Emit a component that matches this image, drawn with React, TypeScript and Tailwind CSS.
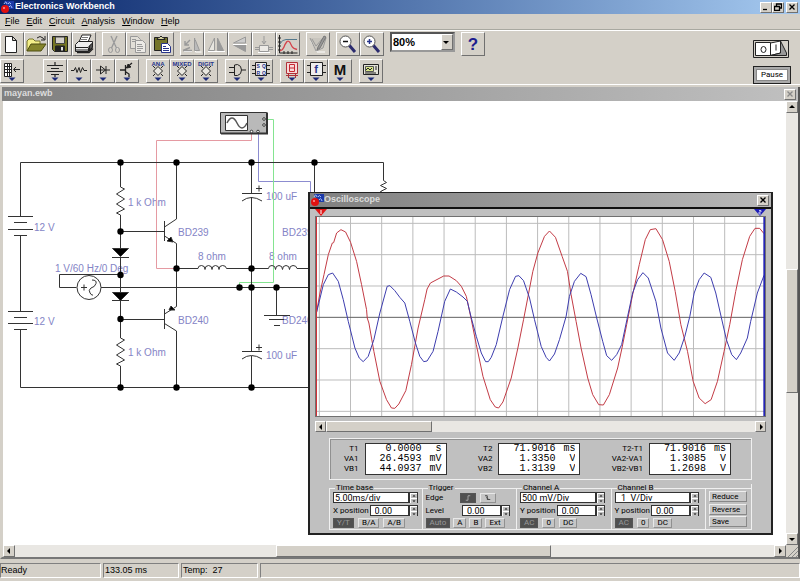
import type { ReactNode } from 'react'
import { clsx } from 'clsx'

const RAISED = 'border border-t-white border-l-white border-b-[#707070] border-r-[#707070]'
const SUNKEN = 'border border-t-[#808080] border-l-[#808080] border-b-white border-r-white'
const TRACK = 'bg-[#e9e7e3]'

/* ---------- Toolbar icons (22x22) ---------- */

function Icon({ children }: { children: ReactNode }) {
  return (
    <svg viewBox="0 0 22 22" className="block size-full" fill="none" stroke="#222" strokeWidth="1">
      {children}
    </svg>
  )
}

// Small navy arrow under every parts bin icon
function BinArrow() {
  return <path d="M7.5 17.5h7l-3.5 3.5z" fill="#1c2a78" stroke="none" />
}

const icons: Record<string, ReactNode> = {
  New: <path d="M4.5 3.5h7l4 4v12h-11zM11.5 3.5v4h4" fill="#fff" />,
  Open: (
    <>
      <path d="M2 18V8l2-2h4l2 2h5v3" fill="#f4f08a" stroke="#77752a" />
      <path d="M2 18l4-7h15l-5 7z" fill="#85852c" stroke="#4c4c10" />
      <path d="M12 5q3-3 6 0l1 1.500M20 3v4h-4" stroke="#222" />
    </>
  ),
  Save: (
    <>
      <path d="M3.500 3.500h15v15h-13l-2-2z" fill="#757522" />
      <path d="M6.500 4h9v6.500h-9z" fill="#d4d0c8" stroke="#444" />
      <path d="M6.500 13h9v5h-9z" fill="#222" />
      <path d="M12 14h2v3.500h-2z" fill="#e0e0e0" stroke="none" />
    </>
  ),
  Print: (
    <>
      <path d="M6 9l3-7h9l-3 7z" fill="#fff" />
      <path d="M9 4.500h6M8 6.500h6" stroke="#777" />
      <path d="M2.500 11.500l3-3h14v6l-4 4h-13z" fill="#eee" />
      <path d="M3 14.500h12l4-4M15.500 14.500v4M3 17h12" />
      <path d="M16.500 13l3-3v4l-3 3z" fill="#555" />
      <path d="M4 19.500h12l4-4" strokeWidth="1.500" />
    </>
  ),
  Cut: (
    <g stroke="#999">
      <path d="M9 5l5 11" stroke="#fff" />
      <path d="M8 3l5.500 12M14 3L8.500 15" strokeWidth="1.400" />
      <ellipse cx="7.500" cy="17" rx="2" ry="2.500" />
      <ellipse cx="14.500" cy="17" rx="2" ry="2.500" />
    </g>
  ),
  Copy: (
    <g stroke="#999">
      <path d="M3.500 3.500h7l3 3v9h-10z" fill="#e2dfd8" />
      <path d="M8.500 7.500h7l3 3v9h-10z" fill="#eceae6" />
      <path d="M5 6.500h4M5 8.500h3M10 11.500h5M10 13.500h6M10 15.500h6M10 17.500h4" />
    </g>
  ),
  Paste: (
    <>
      <path d="M3.500 4.500h13v13h-13z" fill="#75752a" />
      <path d="M6 6.500q0-2 2.500-2q1.500-3 3 0q2.500 0 2.500 2z" fill="#d8d4a0" />
      <path d="M10.500 10.500h6l3 3v6h-9z" fill="#fff" stroke="#27348b" />
      <path d="M12 13.500h3M12 15.500h6M12 17.500h6" stroke="#27348b" />
    </>
  ),
  Rotate: (
    <g stroke="#999">
      <path d="M14.500 6v13h6M3 18.500h8" stroke="#fff" />
      <path d="M13.500 5v12.500h5z" fill="#bbb" />
      <path d="M2 17.500h9M2 17.500l7-3M4 12l5-5M4 8v4h4" strokeWidth="1.400" />
    </g>
  ),
  'Flip Horizontal': (
    <g stroke="#999">
      <path d="M3 18.500h17" stroke="#fff" />
      <path d="M9.500 5v12.500H3.500z" fill="#e8e6e0" />
      <path d="M12.500 5v12.500h6z" fill="#999" />
    </g>
  ),
  'Flip Vertical': (
    <g stroke="#999">
      <path d="M16.500 4v6h-12z" fill="#ccc" />
      <path d="M4.500 12h12v6.500z" fill="#999" />
      <path d="M4 11.500h14" stroke="#fff" />
    </g>
  ),
  'Create Subcircuit': (
    <g stroke="#999">
      <path d="M11 3v7M9 8l2 3 2-3" />
      <path d="M6.500 12.500h9v6h-9zM2 14.500h4M2 16.500h4M16 14.500h4M16 16.500h4" fill="#eceae6" />
      <path d="M5 19.500h12" stroke="#fff" />
    </g>
  ),
  'Display Graphs': (
    <>
      <path d="M2.500 2v18h18M1 5h3M1 9h3M1 13h3M1 17h3M7 18v3M11 18v3M15 18v3" />
      <path d="M3 11q2-4.500 6-4.500h11" stroke="#54788c" />
      <path d="M3 18q3-1 4-4t3-5.500q1.500-1 3 1l2 4q1 2 5 3" stroke="#d4434b" strokeWidth="1.300" />
    </>
  ),
  'Component Properties': (
    <g stroke="#999">
      <path d="M4 8l6 11h8" stroke="#fff" />
      <path d="M3 5l6 13 7-3 3-10M5 6l4 7 7-8" fill="#c8c5be" />
      <path d="M17 3l-6 11-1 3 3-2 6-11z" fill="#999" stroke="#777" />
    </g>
  ),
  'Zoom Out': (
    <>
      <path d="M12 12l6 7" stroke="#2b2b6e" strokeWidth="3" />
      <circle cx="8.500" cy="8.500" r="5.500" fill="#fff" stroke="#555" />
      <path d="M6 8.500h5" stroke="#111" strokeWidth="1.500" />
    </>
  ),
  'Zoom In': (
    <>
      <path d="M12 12l6 7" stroke="#2b2b6e" strokeWidth="3" />
      <circle cx="8.500" cy="8.500" r="5.500" fill="#fff" stroke="#555" />
      <path d="M6 8.500h5M8.500 6v5" stroke="#27348b" strokeWidth="1.500" />
    </>
  ),
  Favorites: (
    <>
      <path d="M3.500 3.500h7v13h-7z" fill="#fff" />
      <path d="M3.500 6.500h7M3.500 9.500h7M3.500 12.500h7M6.500 4v12M8.500 4v12M13 9.500h6M15 7l-2.500 2.500L15 12" />
      <BinArrow />
    </>
  ),
  Sources: (
    <>
      <path d="M11 2v3M3 5.500h16M7 8.500h8M3 11.500h16M7 14.500h8M11 14v3" strokeWidth="1.200" />
      <BinArrow />
    </>
  ),
  Basic: (
    <>
      <path d="M3 10.500h3l1.500-3 1.500 5 2-5 1.500 5 2-5 1.500 3h3" />
      <BinArrow />
    </>
  ),
  Diodes: (
    <>
      <path d="M4 10h14M8.500 6v8l5-4zM14 6v8" />
      <BinArrow />
    </>
  ),
  Transistors: (
    <>
      <path d="M4 10h5M9.500 5v10M10 8l6-5M10 12l3 2v3" strokeWidth="1.300" />
      <path d="M11 8l1-4 3 3z" fill="#222" />
      <BinArrow />
    </>
  ),
  'Logic Gates': (
    <>
      <path d="M3 7.500h5M3 12.500h5M8.500 5v10.500h3q4-1 4-5.500t-4-5.500zM16 10h4" />
      <BinArrow />
    </>
  ),
  Indicators: (
    <>
      <path d="M5.500 2.500h11v11h-11z" fill="#f7d9d9" stroke="#b03038" />
      <path d="M8.500 4.500h5v7h-5zM8.500 8h5" stroke="#c62630" />
      <path d="M5 15.500h12M7.500 14v4M14.500 14v4" stroke="#b03038" />
      <BinArrow />
    </>
  ),
  Instruments: (
    <>
      <path d="M3.500 4.500h15v10h-15z" fill="#e3e2d8" />
      <path d="M5.500 6.500h8v5h-8z" fill="#d9e88a" stroke="#555" />
      <path d="M6 10l2-2 2 2 2-2M15 7h2M15 9h2M5 13h11" />
      <BinArrow />
    </>
  ),
}

const packages: Record<string, string> = {
  'Analog ICs': 'ANA',
  'Mixed ICs': 'MIXED',
  'Digital ICs': 'DIGIT',
}

// Icons that carry lettering
function Lettered({ name }: { name: string }) {
  if (packages[name]) {
    return (
      <Icon>
        <text x="11" y="6" textAnchor="middle" stroke="none" fill="#27348b" className="font-bold text-[6px]">
          {packages[name]}
        </text>
        <path d="M11 6.500l4.500 4.500-4.500 4.500L6.500 11z" fill="#e9e7e0" />
        <path d="M8 8L6 6M14 14l2 2M8 14l-2 2M14 8l2-2" />
        <BinArrow />
      </Icon>
    )
  }
  if (name === 'Digital') {
    return (
      <Icon>
        <path d="M5.500 2.500h11v13h-11zM2 5.500h3M2 9.500h3M2 13.500h3M17 5.500h3M17 9.500h3M17 13.500h3" fill="#eee" />
        <g stroke="none" fill="#27348b" className="font-bold text-[5px]">
          <text x="6.500" y="8">S</text>
          <text x="12" y="8">Q</text>
          <text x="6.500" y="14.500">R</text>
          <text x="12" y="14.500">Q</text>
        </g>
        <BinArrow />
      </Icon>
    )
  }
  if (name === 'Controls') {
    return (
      <Icon>
        <path d="M5.500 2.500h12v13h-12zM2 5.500h3M2 12.500h3M18 5.500h3M18 12.500h3" fill="#eee" />
        <text x="11" y="13" textAnchor="middle" stroke="none" fill="#27348b" className="font-bold text-[11px]">
          f
        </text>
        <BinArrow />
      </Icon>
    )
  }
  if (name === 'Help') {
    return (
      <Icon>
        <text x="11" y="17" textAnchor="middle" stroke="none" fill="#1d1d8f" className="font-bold text-[17px]">
          ?
        </text>
      </Icon>
    )
  }
  return (
    <Icon>
      <text x="11" y="15" textAnchor="middle" stroke="none" fill="#111" className="font-bold text-[15px]">
        M
      </text>
      <BinArrow />
    </Icon>
  )
}

function ToolButton({ name }: { name: string }) {
  return (
    <button type="button" aria-label={name} className={clsx('size-6 shrink-0 bg-[#d4d0c8]', RAISED)}>
      {icons[name] ? <Icon>{icons[name]}</Icon> : <Lettered name={name} />}
    </button>
  )
}

function ToolGroup({ names }: { names: string[] }) {
  return (
    <div className="flex">
      {names.map((name) => (
        <ToolButton key={name} name={name} />
      ))}
    </div>
  )
}

/* ---------- Window chrome ---------- */

function AppGlyph() {
  return (
    <svg viewBox="0 0 14 14" className="size-3.5 shrink-0">
      <path d="M4 1h10v8H8z" fill="#1d3aa8" />
      <path d="M4 4q2-4 3 0M8 4q1-3 3 0M9 7q2-3 3 1" fill="none" stroke="#a9c4ff" />
      <circle cx="5" cy="9" r="4" fill="#e01010" />
      <circle cx="4" cy="8" r="1" fill="#ff9a9a" />
    </svg>
  )
}

function CaptionButton({ label, path, muted }: { label: string; path: string; muted?: boolean }) {
  return (
    <button
      type="button"
      aria-label={label}
      className={clsx('flex h-[11px] w-3 items-center justify-center bg-[#d4d0c8]', RAISED)}
    >
      <svg viewBox="0 0 8 8" className="size-2" fill="none" stroke={muted ? '#888' : '#000'} strokeWidth="1.300">
        <path d={path} />
      </svg>
    </button>
  )
}

const CLOSE = 'M1.500 1.500l5 5M6.500 1.500l-5 5'

const arrows = {
  left: 'M5 1v6L2 4z',
  right: 'M3 1v6l3-3z',
  up: 'M1 5h6L4 2z',
  down: 'M1 3h6L4 6z',
}

function ScrollButton({ dir, small }: { dir: keyof typeof arrows; small?: boolean }) {
  return (
    <button
      type="button"
      aria-label={`Scroll ${dir}`}
      className={clsx('flex shrink-0 items-center justify-center bg-[#d4d0c8]', RAISED, small ? 'size-[11px]' : 'size-3')}
    >
      <svg viewBox="0 0 8 8" className="size-2">
        <path d={arrows[dir]} />
      </svg>
    </button>
  )
}

/* ---------- Circuit ---------- */

const junctions = [
  [120.5, 162.5], [176.5, 162.5], [251.5, 162.5], [314.5, 162.5],
  [120.5, 231.5], [120.5, 275], [120.5, 319],
  [176.5, 268.5], [251.5, 268.5],
  [239.5, 287.5], [251.5, 287.5], [276.5, 287.5],
  [120.5, 387.5], [176.5, 387.5], [251.5, 387.5],
]

const labels: [number, number, string][] = [
  [34, 231, '12 V'],
  [34, 325, '12 V'],
  [128, 206, '1 k Ohm'],
  [128, 356, '1 k Ohm'],
  [55, 272, '1 V/60 Hz/0 Deg'],
  [178, 236, 'BD239'],
  [178, 324, 'BD240'],
  [282, 236, 'BD239'],
  [282, 324, 'BD240'],
  [198, 260, '8 ohm'],
  [269, 260, '8 ohm'],
  [266, 200, '100 uF'],
  [266, 359, '100 uF'],
]

function Circuit() {
  return (
    <svg viewBox="3 101 400 300" width="400" height="300" className="block" fill="none" stroke="#333">
      <g fill="#8484c6" stroke="none" className="text-[10px]">
        {labels.map(([x, y, text]) => (
          <text key={`${x}-${y}`} x={x} y={y}>
            {text}
          </text>
        ))}
      </g>

      {/* Probe leads */}
      <path d="M251.500 133v7.500h-95v128h20" stroke="#e59aa2" />
      <path d="M258.500 133v48.500h52v12" stroke="#8c8cd0" />
      <path d="M265 119.500h8.500v163h-34v5" stroke="#84e490" />

      {/* Supply rails and batteries */}
      <path d="M20.500 216.500v-54h363v18l3 2-6 3 6 3-6 3 6 3M20.500 236v75M20.500 330v57.500h300" />
      <path d="M8 216.500h25M14 222.500h13M8 229.500h25M14 235.500h13M8 311.500h25M14 317.500h13M8 323.500h25M14 329.500h13" />

      {/* Bias chain */}
      <path d="M120.500 162v25l4 2-8 5 8 5-8 5 8 5-8 4 4 2v34M120.500 257v35M120.500 300v38l4 2-8 5 8 5-8 5 8 5-8 4 4 2v21" />
      <path d="M112.500 248.500h16l-8 8zM112.500 292.500h16l-8 8z" fill="#000" />
      <path d="M112 257.500h17M112 300.500h17M120 231.500h44M120 319.500h44" />

      {/* Signal source */}
      <path d="M120.500 275v-.5h-61v13h17M101 287.500h215" />
      <circle cx="89" cy="287.500" r="12" />
      <path d="M81 287.500h6M84 284.500v6M92 280q5 0 4 3.500t-5 4.500q-3 2-1 5t3 2" />

      {/* Output transistors */}
      <path d="M164.500 221v20M164.500 227l12-8v-57M164.500 236l12 7.500v63l-12 7.500M164.500 309v20M164.500 323.500l12 7.500v57" />
      <path d="M167 241l4-4 2 5zM169 310l2-4 4 4z" fill="#000" />

      {/* Output chokes and coupling capacitors */}
      <path d="M176 268.500h22q0-3 3.500-3t3.500 4q0-4 3.500-4t3.500 4q0-4 3.500-4t3.500 4q0-4 3.500-4t4 3h42q0-3 3.500-3t3.500 4q0-4 3.500-4t3.500 4q0-4 3.500-4t3.500 4q0-4 3.500-4t4 3h12" />
      <path d="M251.500 162v31M251.500 197v154M251.500 356v31M314.500 162v34" />
      <path d="M242 193.500h20M242 201q9-7 20 0M242 351.500h20M242 359q9-7 20 0" />
      <path d="M256 188.500h6M259 185.500v6M256 347.500h6M259 344.500v6" />
      <path d="M276.500 287v28M264 315.500h26M269 319.500h15M274 325.500h6" />

      {junctions.map(([x, y]) => (
        <circle key={`${x}-${y}`} cx={x} cy={y} r="3.200" fill="#000" stroke="none" />
      ))}

      {/* Oscilloscope instrument */}
      <path d="M220.500 112.500h46v21h-46z" fill="#b9b9b9" />
      <path d="M221 133.500h46v-21" strokeWidth="2" />
      <path d="M225.500 115.500h22v15h-22z" fill="#fff" />
      <path d="M227 123q5-10 10 0t10 0" stroke="#555" strokeWidth="1.500" />
      <g fill="#fff">
        <circle cx="251.500" cy="131.500" r="1.300" />
        <circle cx="258" cy="131.500" r="1.300" />
        <circle cx="264" cy="119" r="1.300" />
        <circle cx="264" cy="125" r="1.300" />
      </g>
    </svg>
  )
}

/* ---------- Oscilloscope ---------- */

const channelA =
  '48,392 60,325 72,270 85,210 97,175 101,174 110,145 123,135 137,142 152,173 170,230 185,300 200,375 202,400 207,415 222,500 240,590 260,645 275,670 285,671 297,658 318,618 335,540 355,430 375,345 382,313 392,295 432,274 448,274 470,288 485,305 500,335 515,405 530,480 550,575 572,645 587,667 597,670 610,652 635,580 655,490 672,405 700,260 715,205 735,155 750,139 768,158 788,215 804,260 815,330 830,410 845,490 865,580 880,630 898,660 912,661 930,630 955,550 968,490 982,420 1000,330 1020,240 1038,165 1053,135 1070,132 1090,165 1110,230 1128,320 1145,420 1165,500 1182,590 1200,640 1218,657 1236,645 1255,590 1275,500 1292,420 1310,320 1330,225 1352,155 1368,131 1382,131 1395,147'

const channelB =
  '48,390 70,300 85,270 98,265 115,290 130,345 145,410 165,490 178,520 190,531 205,515 222,465 240,385 262,305 270,303 285,318 300,338 315,355 330,410 347,475 360,515 372,531 382,529 400,500 415,440 435,350 452,313 470,322 490,337 503,350 515,400 530,455 545,505 558,531 566,531 575,518 590,480 610,395 630,315 648,275 658,273 672,288 690,340 705,405 725,485 740,518 750,529 765,508 780,465 800,395 810,335 825,290 844,266 860,276 875,330 892,400 910,470 922,513 937,527 952,510 967,480 985,395 1000,325 1015,285 1031,264 1047,280 1070,350 1085,430 1105,505 1125,527 1140,505 1157,455 1172,395 1185,325 1200,285 1215,265 1235,278 1250,325 1267,400 1282,465 1298,510 1312,525 1325,505 1345,460 1355,410 1375,325 1395,272'

function Traces() {
  return (
    <svg viewBox="48 97 1350 597" preserveAspectRatio="none" className="block h-[199px] w-full bg-white" fill="none" strokeWidth="3">
      <g stroke="#bcbcbc" shapeRendering="crispEdges">
        {Array.from({ length: 15 }).map((_, i) => (
          <line key={i} x1={58 + i * 93.75} x2={58 + i * 93.75} y1="97" y2="694" />
        ))}
        {Array.from({ length: 7 }).map((_, i) => (
          <line key={i} x1="48" x2="1398" y1={116 + i * 94} y2={116 + i * 94} stroke={i === 3 ? '#606060' : '#bcbcbc'} />
        ))}
      </g>
      <polyline points={channelA} stroke="#c23a44" />
      <polyline points={channelB} stroke="#3c3cae" />
      <line x1="48" x2="48" y1="97" y2="694" stroke="#d03038" strokeWidth="6" />
      <line x1="1396" x2="1396" y1="97" y2="694" stroke="#2424b4" strokeWidth="6" />
    </svg>
  )
}

type Reading = [string, string, string]

function Readout({ rows }: { rows: Reading[] }) {
  return (
    <div className="flex items-center gap-1.5">
      <div className="text-right leading-[10px]">
        {rows.map(([name]) => (
          <div key={name}>{name}</div>
        ))}
      </div>
      <div className="w-[82px] border border-[#333] bg-white pr-1 font-['Liberation_Mono',monospace] text-[10px] leading-[10px]">
        {rows.map(([name, value, unit]) => (
          <div key={name} className="flex h-2.5 justify-end overflow-hidden">
            <span>{value}</span>
            <span className="w-5 text-right">{unit}</span>
          </div>
        ))}
      </div>
    </div>
  )
}

function Spinner({ label }: { label: string }) {
  return (
    <div className="flex w-[9px] shrink-0 flex-col border border-[#333]">
      {(['up', 'down'] as const).map((dir) => (
        <button
          key={dir}
          type="button"
          aria-label={`${label} ${dir}`}
          className="flex flex-1 items-center justify-center border-t border-l border-white bg-[#c0c0c0]"
        >
          <svg viewBox="0 0 8 8" className="h-1 w-1.5">
            <path d={arrows[dir]} />
          </svg>
        </button>
      ))}
    </div>
  )
}

// Full-width scale box with no caption of its own
function ScaleField({ label, value }: { label: string; value: string }) {
  return (
    <div className="flex h-[11px] items-stretch">
      <input
        aria-label={label}
        defaultValue={value}
        className="w-0 min-w-0 flex-1 border border-[#333] bg-white pl-px text-[9px] leading-[9px]"
      />
      <Spinner label={label} />
    </div>
  )
}

function Field({ id, label, value }: { id: string; label: string; value: string }) {
  return (
    <div className="flex h-[11px] items-stretch">
      <label htmlFor={id} className="flex-1 leading-[11px] whitespace-nowrap">
        {label}
      </label>
      <input
        id={id}
        defaultValue={value}
        className="w-[39px] border border-[#333] bg-white pl-1 text-[9px] leading-[9px]"
      />
      <Spinner label={label} />
    </div>
  )
}

function Chip({ children, active, label }: { children: ReactNode; active?: boolean; label?: string }) {
  return (
    <button
      type="button"
      aria-label={label}
      aria-pressed={active}
      className={clsx(
        'h-2.5 px-[3px] leading-[8px]',
        active
          ? 'border border-[#555] bg-[#505050] text-[#999]'
          : 'border border-t-[#e8e8e8] border-l-[#e8e8e8] border-b-[#909090] border-r-[#909090] bg-[#c6c6c6]',
      )}
    >
      {children}
    </button>
  )
}

function Panel({ title, children, wide }: { title: string; children: ReactNode; wide?: boolean }) {
  return (
    <fieldset className={clsx('min-w-0 flex-1 border-t border-l border-[#f0f0f0] pb-px pl-[3px]', wide ? 'pr-1' : 'pr-1.5')}>
      <legend className="ml-0.5 h-2 px-px leading-[8px]">{title}</legend>
      <div className="flex flex-col gap-0.5">{children}</div>
    </fieldset>
  )
}

function Channel({ name, scale }: { name: string; scale: string }) {
  return (
    <Panel title={`Channel ${name}`}>
      <ScaleField label={`Channel ${name} scale`} value={scale} />
      <Field id={`y-position-${name.toLowerCase()}`} label="Y position" value="0.00" />
      <div className="flex gap-1">
        <Chip active>AC</Chip>
        <Chip>0</Chip>
        <Chip>DC</Chip>
      </div>
    </Panel>
  )
}

function Oscilloscope() {
  return (
    <section
      aria-label="Oscilloscope"
      className="absolute top-[91px] left-[305px] w-[465px] border-2 border-t border-[#222] bg-[#c0c0c0] font-['Roboto',sans-serif] text-[8px] text-black"
    >
      <header className="flex h-3.5 items-center bg-linear-to-r from-[#808080] to-[#b8b8b8] pr-0.5">
        <AppGlyph />
        <h2 className="flex-1 font-['Liberation_Sans',sans-serif] text-[9px] font-bold text-[#dcdcdc]">Oscilloscope</h2>
        <CaptionButton label="Close oscilloscope" path={CLOSE} />
      </header>

      <div className="border-t-2 border-[#111] px-[5px] pb-[3px]">
        <div className="flex h-[7px] justify-between">
          <svg viewBox="0 0 12 7" className="h-[7px] w-3">
            <path d="M0 0h12L6 7z" fill="#e01818" />
            <path d="M6 1v4" stroke="#fff" />
          </svg>
          <svg viewBox="0 0 12 7" className="h-[7px] w-3">
            <path d="M0 0h12L6 7z" fill="#1c1cb8" />
            <path d="M5 1.500h2v1.500H5v2h2" stroke="#fff" fill="none" strokeWidth=".7" />
          </svg>
        </div>
        <div className="border border-[#707070]">
          <Traces />
        </div>

        <div className={clsx('mt-1 flex', TRACK)}>
          <ScrollButton dir="left" small />
          <div className={clsx('grow-[105] bg-[#d4d0c8]', RAISED)} />
          <div className="grow-[325]" />
          <ScrollButton dir="right" small />
        </div>

        <div className="mx-3.5 mt-1.5 flex items-center justify-between border border-[#f0f0f0] py-1 pr-5 pl-3.5 shadow-[inset_1px_1px_0_#909090]">
          <Readout rows={[['T1', '0.0000', 's'], ['VA1', '26.4593', 'mV'], ['VB1', '44.0937', 'mV']]} />
          <Readout rows={[['T2', '71.9016', 'ms'], ['VA2', '1.3350', 'V'], ['VB2', '1.3139', 'V']]} />
          <Readout rows={[['T2-T1', '71.9016', 'ms'], ['VA2-VA1', '1.3085', 'V'], ['VB2-VB1', '1.2698', 'V']]} />
        </div>

        <div className="mx-3.5 mt-1 flex border-r border-b border-[#f0f0f0]">
          <Panel title="Time base" wide>
            <ScaleField label="Time scale" value="5.00ms/div" />
            <Field id="x-position" label="X position" value="0.00" />
            <div className="flex gap-1">
              <Chip active>Y/T</Chip>
              <Chip>B/A</Chip>
              <Chip>A/B</Chip>
            </div>
          </Panel>
          <Panel title="Trigger">
            <div className="flex h-[11px] items-center gap-1">
              <span className="w-[30px]">Edge</span>
              <Chip active label="Rising edge">
                <svg viewBox="0 0 8 8" className="h-1.5 w-2" fill="none" stroke="#bbb">
                  <path d="M1 7h3V1h3" />
                </svg>
              </Chip>
              <Chip label="Falling edge">
                <svg viewBox="0 0 8 8" className="h-1.5 w-2" fill="none" stroke="#222">
                  <path d="M0 1h3v5h4M2 3l2 2" />
                </svg>
              </Chip>
            </div>
            <Field id="trigger-level" label="Level" value="0.00" />
            <div className="flex gap-[3px]">
              <Chip active>Auto</Chip>
              <Chip>A</Chip>
              <Chip>B</Chip>
              <Chip>Ext</Chip>
            </div>
          </Panel>
          <Channel name="A" scale="500 mV/Div" />
          <Channel name="B" scale="  1  V/Div" />
          <div className="mt-1 flex w-[46px] flex-col justify-between border-t border-l border-[#f0f0f0] py-0.5 pr-1 pl-[3px]">
            {['Reduce', 'Reverse', 'Save'].map((name) => (
              <button
                key={name}
                type="button"
                className="h-[11px] border border-t-[#eee] border-l-[#eee] border-b-[#888] border-r-[#888] bg-[#c6c6c6] pl-0.5 text-left leading-[9px]"
              >
                {name}
              </button>
            ))}
          </div>
        </div>
      </div>
    </section>
  )
}

/* ---------- Application ---------- */

const menus = ['File', 'Edit', 'Circuit', 'Analysis', 'Window', 'Help']

export default function App() {
  return (
    <div className="flex h-screen min-h-[500px] flex-col overflow-hidden bg-[#d4d0c8] font-['Liberation_Sans',sans-serif] text-[9px] text-black">
      <header className="flex h-3.5 shrink-0 items-center bg-linear-to-r from-[#0a246a] to-[#a6caf0] pr-0.5">
        <AppGlyph />
        <h1 className="flex-1 pl-px font-bold text-white">Electronics Workbench</h1>
        <CaptionButton label="Minimize" path="M1 6.500h4" />
        <CaptionButton label="Restore" path="M2.500 3V1h5v4H6M.5 3.500h5v4h-5z" />
        <div className="ml-0.5 flex">
          <CaptionButton label="Close" path={CLOSE} />
        </div>
      </header>

      <nav className="flex h-4 shrink-0 items-center gap-[7px] border-b border-[#a8a8a0] pl-[5px]">
        {menus.map((menu) => (
          <a key={menu} href={`#${menu.toLowerCase()}`}>
            <span className="underline">{menu[0]}</span>
            {menu.slice(1)}
          </a>
        ))}
      </nav>

      <div className="flex shrink-0 items-center justify-between border-t border-b border-t-white border-b-white pr-[9px]">
        <div className="flex flex-col gap-[3px] py-px">
          <div className="flex gap-1.5">
            <ToolGroup names={['New', 'Open', 'Save', 'Print']} />
            <ToolGroup names={['Cut', 'Copy', 'Paste']} />
            <ToolGroup names={['Rotate', 'Flip Horizontal', 'Flip Vertical', 'Create Subcircuit', 'Display Graphs']} />
            <ToolGroup names={['Component Properties']} />
            <ToolGroup names={['Zoom Out', 'Zoom In']} />
            <div className="relative h-5 w-[65px] border-2 border-t-[#555] border-l-[#555] border-b-[#999] border-r-[#999]">
              <select aria-label="Zoom level" defaultValue="80%" className="size-full appearance-none bg-white pl-px text-[11px] leading-4 font-bold">
                <option>50%</option>
                <option>80%</option>
                <option>100%</option>
              </select>
              <span className={clsx('pointer-events-none absolute inset-y-0 right-0 flex w-3 items-center bg-[#d4d0c8]', RAISED)}>
                <svg viewBox="0 0 8 8" className="size-2">
                  <path d={arrows.down} />
                </svg>
              </span>
            </div>
            <ToolGroup names={['Help']} />
          </div>
          <div className="flex gap-[7px]">
            <div className="pr-3">
              <ToolGroup names={['Favorites']} />
            </div>
            <ToolGroup names={['Sources', 'Basic', 'Diodes', 'Transistors']} />
            <ToolGroup names={['Analog ICs', 'Mixed ICs', 'Digital ICs']} />
            <ToolGroup names={['Logic Gates', 'Digital']} />
            <ToolGroup names={['Indicators', 'Controls', 'Miscellaneous']} />
            <ToolGroup names={['Instruments']} />
          </div>
        </div>

        <div className="flex flex-col gap-2 pt-2">
          <button type="button" aria-label="Activate simulation" className="h-[18px] w-9">
            <svg viewBox="0 0 36 18" className="block size-full" fill="none" stroke="#222">
              <path d="M.5.5h35v17H.5z" fill="#d4d0c8" />
              <path d="M2.500 2.500h15v13h-15z" fill="#fff" />
              <path d="M17.500 3l10-2v12l-10 2.500z" fill="#fff" />
              <path d="M27.500 1l6 12v2.500h-16l10-2.500z" fill="#999" />
              <ellipse cx="10.500" cy="9.500" rx="2.500" ry="3" />
              <path d="M23 4.500v6" />
            </svg>
          </button>
          <button type="button" className="h-[18px] w-[38px] border border-[#222] bg-[#aaa] p-0.5 font-['Roboto',sans-serif] text-[8px] leading-none">
            <span className="flex h-full items-center justify-center border border-[#888] bg-white">Pause</span>
          </button>
        </div>
      </div>

      {/* Circuit document window */}
      <main className="mt-0.5 flex min-h-0 flex-1 flex-col border-r-2 border-b-2 border-l-2 border-r-[#555] border-b-[#777] border-l-[#d4d0c8]">
        <div className="flex h-3.5 shrink-0 items-center bg-linear-to-r from-[#808080] to-[#c0c0c0] pr-0.5 pl-0.5">
          <h2 className="flex-1 font-bold text-[#dcdcdc]">mayan.ewb</h2>
          <CaptionButton label="Close mayan.ewb" path={CLOSE} muted />
        </div>
        <div className="flex min-h-0 flex-1 pl-px">
          <div className="relative min-w-0 flex-1 overflow-hidden bg-white">
            <Circuit />
            <Oscilloscope />
          </div>
          <div className={clsx('flex w-3 shrink-0 flex-col', TRACK)}>
            <ScrollButton dir="up" />
            <div className="grow-[156]" />
            <div className={clsx('grow-[123] bg-[#d4d0c8]', RAISED)} />
            <div className="grow-[140]" />
            <ScrollButton dir="down" />
          </div>
        </div>
        <div className="flex shrink-0 pl-px">
          <div className={clsx('flex flex-1', TRACK)}>
            <ScrollButton dir="left" />
            <div className="grow-[261]" />
            <div className={clsx('grow-[273] bg-[#d4d0c8]', RAISED)} />
            <div className="grow-[223]" />
            <ScrollButton dir="right" />
          </div>
          <svg viewBox="0 0 12 12" className="size-3" stroke="#888">
            <path d="M2 12L12 2M6 12l6-6M10 12l2-2" />
          </svg>
        </div>
      </main>

      <footer className="mt-1 mb-[3px] flex h-[15px] shrink-0 gap-0.5 leading-[13px]">
        <div className={clsx('w-[101px]', SUNKEN)}>Ready</div>
        <div className={clsx('w-[76px] pl-px', SUNKEN)}>133.05 ms</div>
        <div className={clsx('w-[77px] pl-px whitespace-pre', SUNKEN)}>Temp:  27</div>
        <div className={clsx('flex-1', SUNKEN)} />
      </footer>
    </div>
  )
}
